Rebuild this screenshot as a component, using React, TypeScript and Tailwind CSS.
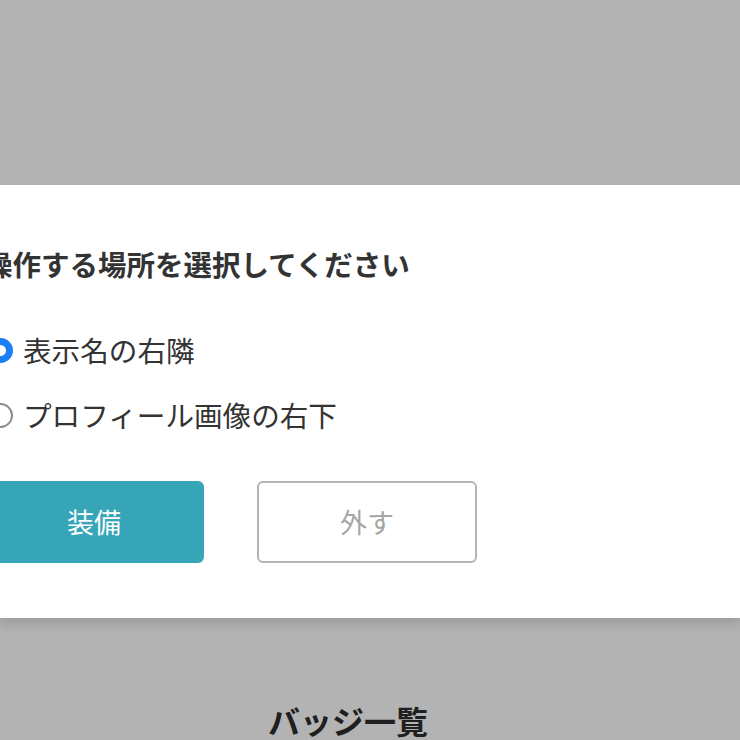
const font = { fontFamily: '"Noto Sans CJK JP", "Noto Sans", sans-serif' };

const options = [
  { label: "表示名の右隣", checked: true },
  { label: "プロフィール画像の右下", checked: false },
];

function Radio({ checked }: { checked: boolean }) {
  return checked ? (
    <span className="block h-[25px] w-[25px] shrink-0 rounded-full border-[7px] border-[#1a7ff5] bg-white" />
  ) : (
    <span className="block h-[25px] w-[25px] shrink-0 rounded-full border-2 border-[#8c8c8c] bg-white" />
  );
}

export default function App() {
  return (
    <div
      className="flex h-[740px] w-[740px] flex-col overflow-hidden bg-[#b3b3b3]"
      style={font}
    >
      <div className="mt-[185px] h-[433px] shrink-0 bg-white shadow-[0_7px_10px_rgba(0,0,0,0.12)]">
        <div className="-ml-4 flex flex-col pt-[59px]">
          <h2 className="text-[28.5px] font-bold leading-[40px] text-[#333]">
            操作する場所を選択してください
          </h2>

          <div className="mt-[46px] flex flex-col gap-[25px]">
            {options.map((o) => (
              <label key={o.label} className="flex h-10 items-center pl-[4px]">
                <Radio checked={o.checked} />
                <span className="ml-[10px] text-[28.6px] leading-[40px] text-[#333]">
                  {o.label}
                </span>
              </label>
            ))}
          </div>

          <div className="mt-[46px] flex gap-[53px]">
            <button className="flex h-[82px] w-[220px] items-center justify-center rounded-md bg-[#36a5b8] text-[27px] text-white">
              装備
            </button>
            <button className="flex h-[82px] w-[220px] items-center justify-center rounded-md border-2 border-[#b5b5b5] bg-white text-[27px] text-[#a6a6a6]">
              外す
            </button>
          </div>
        </div>
      </div>

      <div className="mt-[80px] w-full pr-[44px] text-center text-[32px] font-bold leading-[44px] text-[#1f1f1f]">
        バッジ一覧
      </div>
    </div>
  );
}
